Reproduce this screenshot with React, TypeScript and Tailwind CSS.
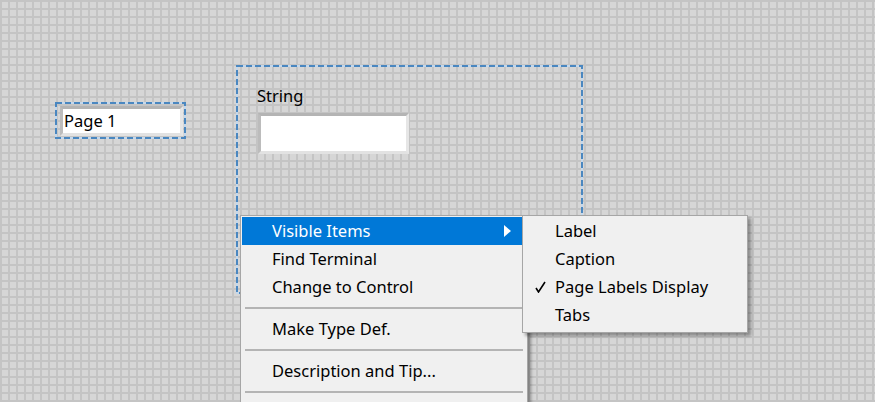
import React from "react";

type Item = { label: string; sep?: false } | { sep: true };

const mainItems: Item[] = [
  { label: "Visible Items" },
  { label: "Find Terminal" },
  { label: "Change to Control" },
  { sep: true },
  { label: "Make Type Def." },
  { sep: true },
  { label: "Description and Tip..." },
  { sep: true },
];

const subItems = ["Label", "Caption", "Page Labels Display", "Tabs"];

// dashed selection marquee around a front panel object
function Selection({ w, h, className }: { w: number; h: number; className: string }) {
  return (
    <svg className={"absolute pointer-events-none " + className} width={w} height={h}>
      <rect x={1} y={1} width={w - 2} height={h - 2} fill="none" stroke="#c4d8ec" strokeWidth={2} />
      <rect x={1} y={1} width={w - 2} height={h - 2} fill="none" stroke="#4a87c0" strokeWidth={2} strokeDasharray="6 3" />
    </svg>
  );
}

function StringBox({ className, children }: { className: string; children?: React.ReactNode }) {
  return (
    <div
      className={
        "absolute border-[3px] border-t-[#b4b4b4] border-l-[#bcbcbc] border-r-[#e6e6e6] border-b-[#e2e2e2] " +
        className
      }
    >
      <div className="w-full h-full bg-white flex items-center px-[1px] text-[16.5px] leading-none text-black">
        {children}
      </div>
    </div>
  );
}

export default function App() {
  return (
    <div
      className="relative w-[875px] h-[402px] overflow-hidden bg-[#d6d6d6] bg-[linear-gradient(to_right,#c4c4c4_2px,transparent_2px),linear-gradient(to_bottom,#c4c4c4_2px,transparent_2px)] bg-[size:8px_8px] text-black"
      style={{ fontFamily: '"Noto Sans", "Open Sans", sans-serif' }}
    >
      {/* Page 1 control */}
      <StringBox className="left-[60px] top-[106px] w-[123px] h-[30px]">Page 1</StringBox>
      <Selection w={131} h={37} className="left-[55px] top-[102px]" />

      {/* String control */}
      <div className="absolute left-[257px] top-[85px] text-[16.5px] leading-[22px]">String</div>
      <StringBox className="left-[258px] top-[113px] w-[151px] h-[41px]" />
      <Selection w={347} h={229} className="left-[236px] top-[65px]" />

      {/* context menu */}
      <div className="absolute left-[240px] top-[215px] w-[288px] h-[200px] bg-[#f0f0f0] border border-[#a6a6a6] p-[1px] shadow-[3px_3px_3px_rgba(0,0,0,0.35)] text-[16.5px]">
        {mainItems.map((it, i) =>
          it.sep ? (
            <div key={i} className="h-[14px] flex items-center px-[3px]">
              <div className="w-full h-[2px] bg-[#b4b4b4]" />
            </div>
          ) : (
            <div
              key={i}
              className={
                "h-[28px] flex items-center pl-[30px] pr-[14px] " +
                (i === 0 ? "bg-[#0078d7] text-white" : "")
              }
            >
              <span className="flex-1">{it.label}</span>
              {i === 0 && (
                <svg width="8" height="12" viewBox="0 0 8 12">
                  <path d="M0 0 L7 6 L0 12 Z" fill="white" />
                </svg>
              )}
            </div>
          )
        )}
      </div>

      {/* submenu */}
      <div className="absolute left-[522px] top-[215px] w-[226px] h-[118px] bg-[#f0f0f0] border border-[#a6a6a6] pt-[1px] shadow-[3px_3px_3px_rgba(0,0,0,0.35)] text-[16.5px]">
        {subItems.map((s) => (
          <div key={s} className="h-[28px] flex items-center">
            <span className="w-[32px] flex justify-center pl-[2px]">
              {s === "Page Labels Display" && (
                <svg width="11" height="12" viewBox="0 0 11 12">
                  <path d="M1 7 L3.5 11 L10 1" fill="none" stroke="black" strokeWidth="1.6" />
                </svg>
              )}
            </span>
            <span>{s}</span>
          </div>
        ))}
      </div>
    </div>
  );
}
